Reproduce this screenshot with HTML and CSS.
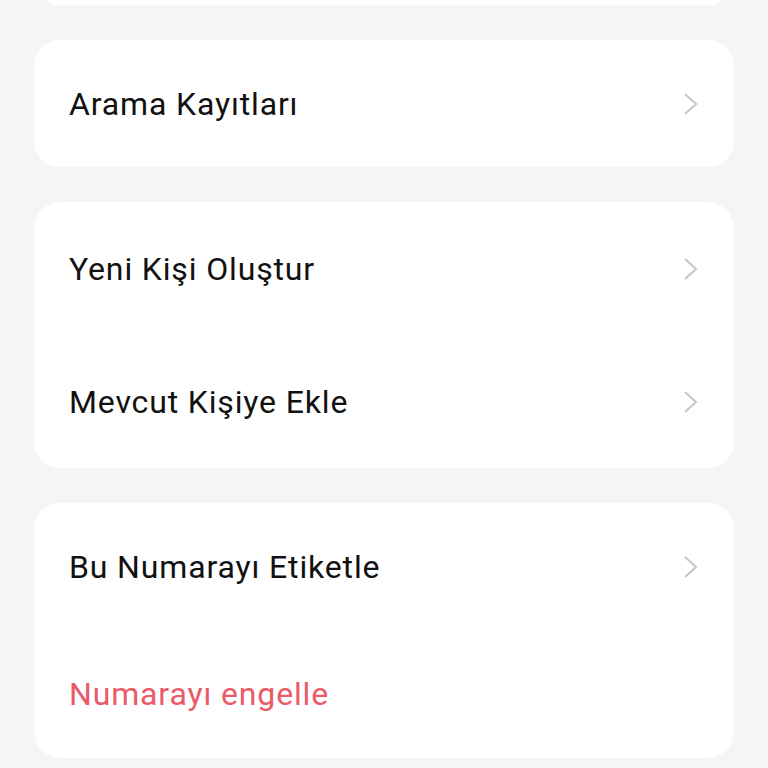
FILE: index.html
```html
<!DOCTYPE html>
<html lang="tr">
<head>
    <meta charset="UTF-8">
    <title>Numara</title>
    <link rel="stylesheet" href="styles.css">
</head>
<body>
<div class="list">
    <div class="card card-top"></div>
    <div class="card">
        <div class="row">
            <span class="label">Arama Kayıtları</span>
            <svg class="arrow" width="16" height="24" viewBox="0 0 16 24"><path d="M2 2 L13 12 L2 22" fill="none" stroke="#c6c6c6" stroke-width="2"/></svg>
        </div>
    </div>
    <div class="card">
        <div class="row row-tall">
            <span class="label">Yeni Kişi Oluştur</span>
            <svg class="arrow" width="16" height="24" viewBox="0 0 16 24"><path d="M2 2 L13 12 L2 22" fill="none" stroke="#c6c6c6" stroke-width="2"/></svg>
        </div>
        <div class="row row-tall">
            <span class="label">Mevcut Kişiye Ekle</span>
            <svg class="arrow" width="16" height="24" viewBox="0 0 16 24"><path d="M2 2 L13 12 L2 22" fill="none" stroke="#c6c6c6" stroke-width="2"/></svg>
        </div>
    </div>
    <div class="card">
        <div class="row row-mid">
            <span class="label">Bu Numarayı Etiketle</span>
            <svg class="arrow" width="16" height="24" viewBox="0 0 16 24"><path d="M2 2 L13 12 L2 22" fill="none" stroke="#c6c6c6" stroke-width="2"/></svg>
        </div>
        <div class="row row-mid">
            <span class="label danger">Numarayı engelle</span>
        </div>
    </div>
</div>
</body>
</html>
```

FILE: styles.css
```css
* {
    margin: 0;
    padding: 0;
}
body {
    background-color: #f5f5f5;
    font-family: Roboto, "Noto Sans", sans-serif;
}
.list {
    padding: 0 34px;
    display: flex;
    flex-direction: column;
    gap: 35px;
}
.card {
    background-color: #ffffff;
    border-radius: 26px;
}
.card-top {
    height: 60px;
    margin-top: -55px;
}
.row {
    height: 127px;
    padding: 0 35px;
    display: flex;
    align-items: center;
    justify-content: space-between;
}
.row-tall {
    height: 133px;
}
.row-mid {
    height: 127.5px;
}
.label {
    font-size: 32px;
    letter-spacing: 0.85px;
    color: #111111;
}
.danger {
    color: #ea5b67;
}
.arrow {
    display: block;
}
```
